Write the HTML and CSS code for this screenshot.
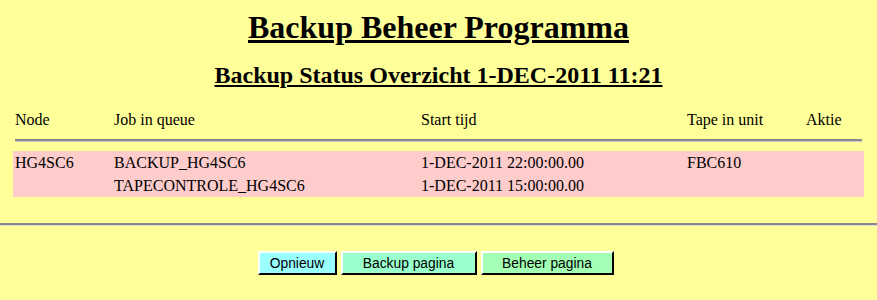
FILE: index.html
```html
<!DOCTYPE html>
<html lang="nl">
<head>
    <meta charset="UTF-8">
    <title>Backup Beheer Programma</title>
    <link rel="stylesheet" href="styles.css">
</head>
<body>
    <h1 class="title">Backup Beheer Programma</h1>
    <h2 class="subtitle">Backup Status Overzicht 1-DEC-2011 11:21</h2>

    <table class="status">
        <thead>
            <tr>
                <th class="col-node">Node</th>
                <th class="col-job">Job in queue</th>
                <th class="col-start">Start tijd</th>
                <th class="col-tape">Tape in unit</th>
                <th class="col-aktie">Aktie</th>
            </tr>
            <tr class="sep-row">
                <td colspan="5"><hr class="sep"></td>
            </tr>
        </thead>
        <tbody>
            <tr class="job">
                <td>HG4SC6</td>
                <td>BACKUP_HG4SC6</td>
                <td>1-DEC-2011 22:00:00.00</td>
                <td>FBC610</td>
                <td></td>
            </tr>
            <tr class="job">
                <td></td>
                <td>TAPECONTROLE_HG4SC6</td>
                <td>1-DEC-2011 15:00:00.00</td>
                <td></td>
                <td></td>
            </tr>
        </tbody>
    </table>

    <hr class="page-sep">

    <div class="buttons">
        <button class="btn btn-opnieuw">Opnieuw</button>
        <button class="btn btn-backup">Backup pagina</button>
        <button class="btn btn-beheer">Beheer pagina</button>
    </div>
</body>
</html>
```

FILE: styles.css
```css
body {
    margin: 0;
    background: #ffff99;
    color: #000;
    font-family: "Liberation Serif", "Times New Roman", serif;
    font-size: 16px;
}

.title {
    margin: 9px 0 0;
    font-size: 32px;
    line-height: 37px;
    text-align: center;
    text-decoration: underline;
}
.subtitle {
    margin: 15px 0 0;
    font-size: 24px;
    line-height: 28px;
    text-align: center;
    text-decoration: underline;
}

/* tabel met jobs */
.status {
    width: 851px;
    margin: 19px auto 0;
    border-collapse: collapse;
}
.status th,
.status td {
    padding: 2px;
    height: 19px;
    line-height: 19px;
    text-align: left;
    font-weight: normal;
    vertical-align: middle;
}
.col-node  { width: 95px; }
.col-job   { width: 303px; }
.col-start { width: 262px; }
.col-tape  { width: 115px; }
.sep-row td {
    height: auto;
    padding: 8px 2px 9px;
}
.sep {
    margin: 0;
    height: 0;
    border: 0;
    border-top: 2px solid #888;
    border-bottom: 1px solid #ccc;
}
.job td {
    background: #ffcccc;
}

.page-sep {
    margin: 26px 0 0;
    height: 0;
    border: 0;
    border-top: 2px solid #888;
    border-bottom: 1px solid #ddd;
}

.buttons {
    display: flex;
    justify-content: center;
    gap: 4px;
    margin-top: 25px;
    padding-right: 6px;
}
.btn {
    font-family: "Liberation Sans", Arial, sans-serif;
    font-size: 13.8px;
    height: 24px;
    padding: 0 8px;
    border: 2px outset #fff;
    border-right-color: #444;
    border-bottom-color: #444;
    color: #000;
}
.btn-opnieuw { background: #99ffff; width: 79px; }
.btn-backup  { background: #99ffcc; width: 136px; }
.btn-beheer  { background: #a2ffb4; width: 133px; }
```
